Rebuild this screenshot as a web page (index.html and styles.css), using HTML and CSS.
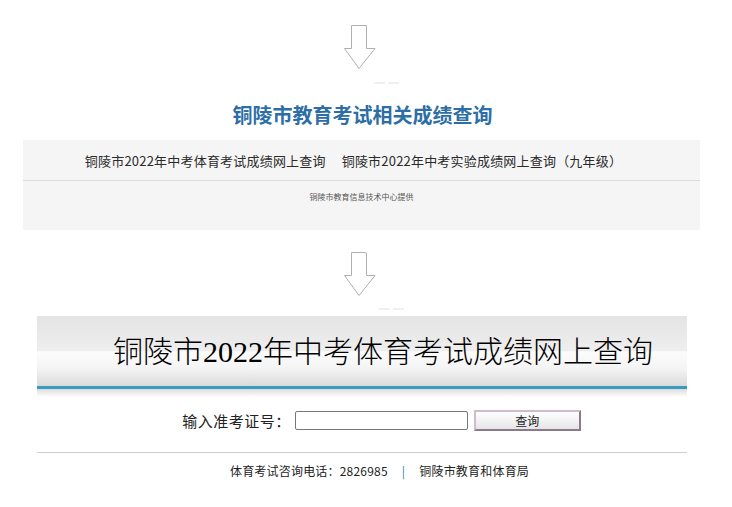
FILE: index.html
```html
<!DOCTYPE html>
<html lang="zh-CN">
<head>
<meta charset="utf-8">
<title>铜陵市教育考试相关成绩查询</title>
<link rel="stylesheet" href="styles.css">
</head>
<body>
<div class="page">
  <div class="arrow arrow-first">
    <svg width="34" height="46" viewBox="0 0 34 46"><path d="M8.5 1.5 H23.5 V24.5 H32 L16 44.5 L1.5 24.5 H8.5 Z" fill="#fff" stroke="#b0b0b0" stroke-width="1"/></svg>
  </div>
  <div class="mark"><span></span><span></span></div>
  <h1 class="title">铜陵市教育考试相关成绩查询</h1>
  <div class="panel">
    <div class="links">
      <a href="#">铜陵市2022年中考体育考试成绩网上查询</a>
      <a href="#">铜陵市2022年中考实验成绩网上查询（九年级）</a>
    </div>
    <div class="provider">铜陵市教育信息技术中心提供</div>
  </div>
  <div class="arrow arrow-second">
    <svg width="34" height="46" viewBox="0 0 34 46"><path d="M8.5 1.5 Q8.5 1.5 10 1.5 H22 Q23.5 1.5 23.5 3 V24.5 H32 L16 44.5 L1.5 24.5 H8.5 Z" fill="#fff" stroke="#b0b0b0" stroke-width="1"/></svg>
  </div>
  <div class="mark mark-second"><span></span><span></span></div>
  <div class="banner">
    <div class="banner-body">铜陵市2022年中考体育考试成绩网上查询</div>
    <div class="banner-shadow"></div>
  </div>
  <form class="query">
    <label class="query-label" for="zkz">输入准考证号：</label>
    <input class="query-input" id="zkz" type="text">
    <button class="query-btn" type="button">查询</button>
  </form>
  <div class="rule"></div>
  <div class="footer">
    <span>体育考试咨询电话：2826985</span>
    <span class="pipe">|</span>
    <span>铜陵市教育和体育局</span>
  </div>
</div>
</body>
</html>
```
FILE: styles.css
```css
html, body {
  margin: 0;
  padding: 0;
  background: #fff;
}
body {
  font-family: "Noto Sans CJK SC", "Noto Sans", sans-serif;
  color: #333;
}
.page {
  width: 677px;
  margin-left: 23px;
  display: flex;
  flex-direction: column;
}
.arrow {
  display: flex;
  justify-content: center;
  height: 46px;
}
.arrow svg {
  display: block;
  margin-left: -4px;
}
.arrow-first {
  margin-top: 24px;
}
.arrow-second {
  margin-top: 21px;
}
.mark {
  display: flex;
  justify-content: center;
  gap: 3px;
  height: 3px;
  margin-top: 12px;
  padding-left: 50px;
}
.mark span {
  width: 11px;
  height: 2px;
  background: #f0f0f0;
}
.mark-second {
  margin-top: 11px;
  padding-left: 60px;
}
.title {
  margin: 16px 0 0;
  font-size: 20px;
  line-height: 28px;
  font-weight: bold;
  color: #2c6ea5;
  text-align: center;
  padding-left: 2px;
}
.panel {
  margin-top: 11px;
  background: #f5f5f5;
  height: 90px;
}
.links {
  height: 40px;
  display: flex;
  justify-content: center;
  align-items: center;
  gap: 16px;
  border-bottom: 1px solid #dcdcdc;
  font-size: 13px;
  letter-spacing: 0.2px;
  padding-right: 16px;
}
.links a {
  color: #2a2a2a;
  text-decoration: none;
}
.provider {
  margin-top: 10px;
  font-size: 8px;
  line-height: 12px;
  text-align: center;
  color: #555;
}
.banner {
  margin: 5px 13px 0 14px;
}
.banner-body {
  height: 70px;
  line-height: 72px;
  padding-left: 76px;
  font-family: "Liberation Serif", "Noto Sans CJK SC", serif;
  font-size: 30px;
  font-weight: 300;
  color: #000;
  background: linear-gradient(to bottom, #e4e4e4 0%, #eeeeee 50%, #fcfcfc 51%, #f4f4f4 75%, #dadada 100%);
  border-bottom: 3px solid #3a9bc2;
  white-space: nowrap;
}
.banner-shadow {
  height: 8px;
  background: linear-gradient(to bottom, #dcdcdc, #ffffff);
}
.query {
  margin: 12px 0 0;
  display: flex;
  align-items: center;
  justify-content: center;
  padding-left: 40px;
  height: 22px;
}
.query-label {
  font-size: 15px;
  letter-spacing: 0.5px;
  color: #222;
  margin-right: 4px;
}
.query-input {
  width: 173px;
  height: 19px;
  box-sizing: border-box;
  border: 1px solid #777;
  border-radius: 2px;
  padding: 0 2px;
  margin: 0;
}
.query-btn {
  width: 107px;
  height: 21px;
  margin: 0 0 0 6px;
  padding: 0;
  box-sizing: border-box;
  border: 2px solid;
  border-color: #d2bccc #8c7a88 #8c7a88 #d2bccc;
  background: linear-gradient(to bottom, #ffffff, #e6e6e6);
  font-family: "Noto Sans CJK SC", sans-serif;
  font-size: 12px;
  color: #222;
}
.rule {
  margin: 21px 13px 0 14px;
  height: 1px;
  background: #cfcfcf;
}
.footer {
  margin-top: 7px;
  height: 20px;
  display: flex;
  justify-content: center;
  align-items: center;
  gap: 12px;
  font-size: 12px;
  letter-spacing: 0.2px;
  color: #222;
  padding-left: 36px;
}
.pipe {
  color: #1a7fc0;
  margin: 0 2px;
}
```
